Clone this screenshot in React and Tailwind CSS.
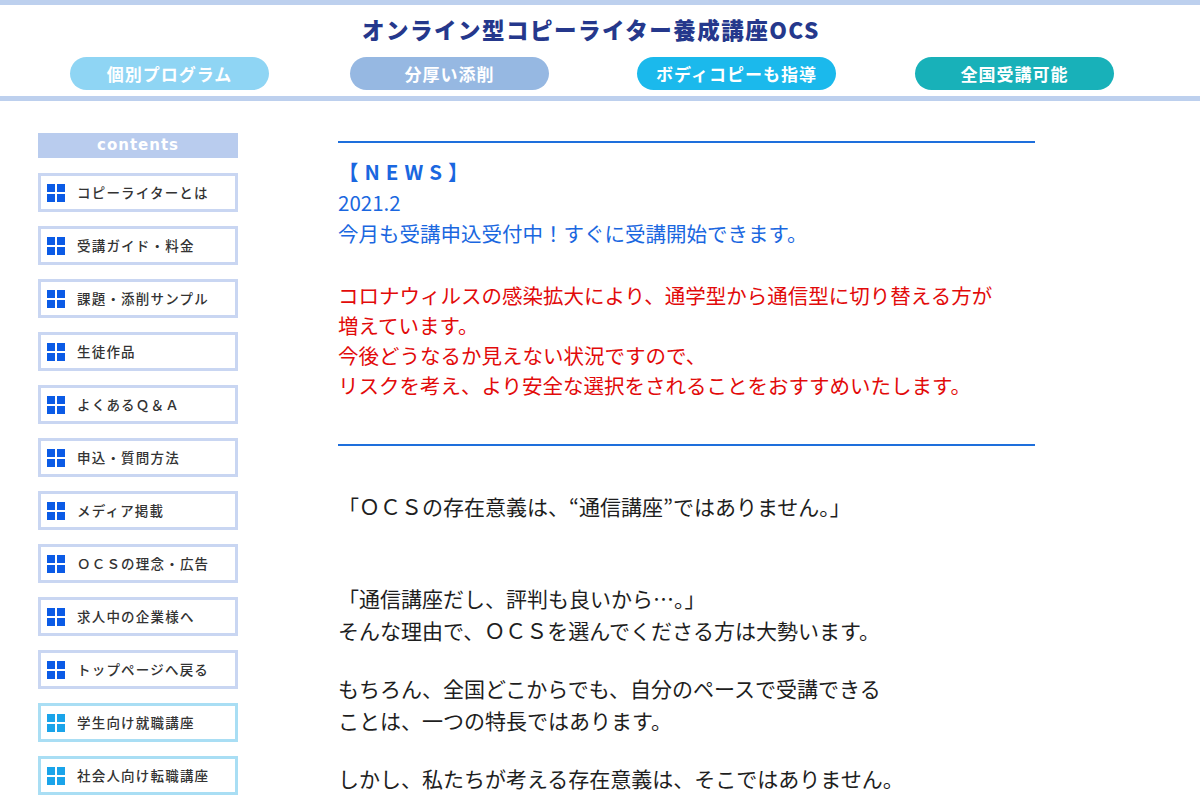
import React from 'react';

const font = { fontFamily: '"Noto Sans CJK JP", "Noto Sans", sans-serif' };

const pills = [
  { label: '個別プログラム', cls: 'bg-[#8fd5f4]' },
  { label: '分厚い添削', cls: 'bg-[#96b8e2]' },
  { label: 'ボディコピーも指導', cls: 'bg-[#1bb9ec]' },
  { label: '全国受講可能', cls: 'bg-[#18b1b9]' },
];

const menu = [
  { label: 'コピーライターとは' },
  { label: '受講ガイド・料金' },
  { label: '課題・添削サンプル' },
  { label: '生徒作品' },
  { label: 'よくあるＱ＆Ａ' },
  { label: '申込・質問方法' },
  { label: 'メディア掲載' },
  { label: 'ＯＣＳの理念・広告' },
  { label: '求人中の企業様へ' },
  { label: 'トップページへ戻る' },
  { label: '学生向け就職講座', alt: true },
  { label: '社会人向け転職講座', alt: true },
];

function Squares({ alt }) {
  const c = alt ? 'bg-[#1aa4ea]' : 'bg-[#0b5be6]';
  return (
    <div className="grid grid-cols-2 gap-[2px] w-[18px] h-[18px] shrink-0">
      <span className={c} />
      <span className={c} />
      <span className={c} />
      <span className={c} />
    </div>
  );
}

export default function App() {
  return (
    <div className="w-[1200px] min-h-[807px] bg-white overflow-hidden" style={font}>
      {/* header */}
      <div className="border-t-[5px] border-b-[5px] border-[#bdd0ee] h-[101px]">
        <div className="flex justify-center pt-[8px] pr-[18px]">
          <h1 className="text-[22.5px] leading-[32px] font-black text-[#25388c] tracking-[1.5px]">
            オンライン型コピーライター養成講座OCS
          </h1>
        </div>
        <div className="flex mt-[12px] pl-[70px] gap-x-[81px]">
          {pills.map((p, i) => (
            <div
              key={i}
              className={`w-[199px] h-[33px] rounded-full flex items-center justify-center text-white font-bold text-[17px] tracking-[1px] ${p.cls} ${i === 2 ? 'ml-[7px]' : ''} ${i === 3 ? '-ml-[2px]' : ''}`}
            >
              {p.label}
            </div>
          ))}
        </div>
      </div>

      <div className="flex pt-[32px]">
        {/* sidebar */}
        <div className="w-[200px] ml-[38px] shrink-0">
          <div className="h-[25px] bg-[#b9ccee] flex items-center justify-center text-white font-bold text-[15px] tracking-[1px]" style={{ fontFamily: '"DejaVu Sans", sans-serif' }}>
            contents
          </div>
          <div className="flex flex-col gap-[14px] mt-[15px]">
            {menu.map((m, i) => (
              <div
                key={i}
                className={`h-[39px] border-[3px] bg-white flex items-center pl-[6px] gap-[12px] ${m.alt ? 'border-[#a9def4]' : 'border-[#c9d6f2]'}`}
              >
                <Squares alt={m.alt} />
                <span className="text-[13.5px] font-medium text-[#333] tracking-[1.2px]">{m.label}</span>
              </div>
            ))}
          </div>
        </div>

        {/* main */}
        <div className="ml-[100px] w-[697px] text-[20.5px]">
          <div className="border-t-2 border-[#1e6fdc] mt-[8px]" />
          <div className="pt-[13px] leading-[31px] text-[#1a67e0]">
            <p className="font-bold tracking-[6px]">【NEWS】</p>
            <p>2021.2</p>
            <p>今月も受講申込受付中！すぐに受講開始できます。</p>
            <div className="h-[31px]" />
            <div className="text-[#e20a0a] leading-[30px]">
              <p>コロナウィルスの感染拡大により、通学型から通信型に切り替える方が</p>
              <p>増えています。</p>
              <p>今後どうなるか見えない状況ですので、</p>
              <p>リスクを考え、より安全な選択をされることをおすすめいたします。</p>
            </div>
          </div>
          <div className="border-t-2 border-[#1e6fdc] mt-[44px]" />
          <div className="text-[#1e1e1e] text-[21px] leading-[32px]">
            <p className="mt-[44px]">「ＯＣＳの存在意義は、“通信講座”ではありません。」</p>
            <p className="mt-[60px]">「通信講座だし、評判も良いから…。」</p>
            <p>そんな理由で、ＯＣＳを選んでくださる方は大勢います。</p>
            <p className="mt-[26px]">もちろん、全国どこからでも、自分のペースで受講できる</p>
            <p>ことは、一つの特長ではあります。</p>
            <p className="mt-[26px]">しかし、私たちが考える存在意義は、そこではありません。</p>
          </div>
        </div>
      </div>
    </div>
  );
}
